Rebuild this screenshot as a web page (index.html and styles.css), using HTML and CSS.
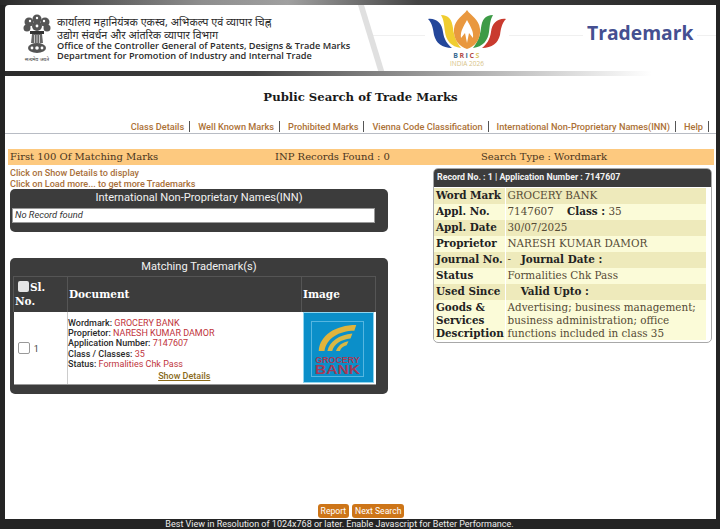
FILE: index.html
```html
<!DOCTYPE html>
<html lang="en">

<head>
    <meta charset="UTF-8">
    <title>Public Search of Trade Marks</title>
    <link rel="stylesheet" href="styles.css">
</head>

<body>
    <div class="top-strip"></div>

    <div class="page">
        <!-- Banner -->
        <header class="banner">
            <div class="banner-line"></div>
            <div class="banner-band"></div>
            <svg class="emblem" viewBox="0 0 30 50" aria-hidden="true">
                <g fill="#555">
                    <circle cx="15" cy="6" r="4.5"/>
                    <circle cx="7" cy="9" r="4.5"/>
                    <circle cx="23" cy="9" r="4.5"/>
                    <circle cx="5" cy="15" r="3.5"/>
                    <circle cx="25" cy="15" r="3.5"/>
                    <circle cx="15" cy="13" r="5"/>
                </g>
                <g fill="#fff">
                    <circle cx="8" cy="8" r="1.2"/>
                    <circle cx="22" cy="8" r="1.2"/>
                    <circle cx="15" cy="5" r="1.2"/>
                    <circle cx="15" cy="13" r="1.4"/>
                </g>
                <rect x="8" y="18" width="14" height="3" fill="#333"/>
                <path d="M10 21h10l1 9H9z" fill="#666"/>
                <path d="M12.500 22v8M15 22v8M17.500 22v8" stroke="#ddd" stroke-width=".8"/>
                <ellipse cx="15" cy="35" rx="9" ry="5" fill="#555"/>
                <circle cx="10" cy="35" r="1.400" fill="#fff"/>
                <circle cx="15" cy="35" r="1.800" fill="#fff"/>
                <circle cx="20" cy="35" r="1.400" fill="#fff"/>
                <text x="15" y="48" class="emblem-motto" text-anchor="middle">सत्यमेव जयते</text>
            </svg>
            <div class="office">
                <div class="office-hi">कार्यालय महानियंत्रक एकस्व, अभिकल्प एवं व्यापार चिह्न</div>
                <div class="office-hi">उद्योग संवर्धन और आंतरिक व्यापार विभाग</div>
                <div class="office-en">Office of the Controller General of Patents, Designs &amp; Trade Marks</div>
                <div class="office-en">Department for Promotion of Industry and Internal Trade</div>
            </div>
            <div class="brics">
                <svg class="lotus" viewBox="0 0 80 42" aria-hidden="true">
                    <path d="M1 9C9 8 15 13 16 22C17 29 20 34 25 38C15 38 9 33 7 25C6 18 5 13 1 9Z" fill="#24479a"/>
                    <path d="M14 5C22 5 25 10 26 18C27 27 30 33 34 38C24 37 19 30 18 22C17 15 17 10 14 5Z" fill="#f0cd30"/>
                    <path d="M79 9C71 8 65 13 64 22C63 29 60 34 55 38C65 38 71 33 73 25C74 18 75 13 79 9Z" fill="#c93a2e"/>
                    <path d="M66 5C58 5 55 10 54 18C53 27 50 33 46 38C56 37 61 30 62 22C63 15 63 10 66 5Z" fill="#3d9b47"/>
                    <path d="M40 0C44 6 52 9 53 19C54 30 47 37 40 39C33 37 26 30 27 19C28 9 36 6 40 0Z" fill="#e9983f"/>
                    <path d="M40 10C43 16 47 21 46 28L42 23L40 33L38 23L34 28C33 21 37 16 40 10Z" fill="#fff"/>
                </svg>
                <div class="brics-name"><span class="c-blue">B</span><span class="c-red">R</span><span class="c-blue">I</span><span class="c-red">C</span><span class="c-yellow">S</span></div>
                <div class="brics-year">INDIA 2026</div>
            </div>
            <div class="trademark">Trademark</div>
        </header>
        <div class="banner-rule"></div>

        <h1 class="page-title">Public Search of Trade Marks</h1>

        <nav class="menu">
            <a href="#">Class Details</a>
            <a href="#">Well Known Marks</a>
            <a href="#">Prohibited Marks</a>
            <a href="#">Vienna Code Classification</a>
            <a href="#">International Non-Proprietary Names(INN)</a>
            <a href="#">Help</a>
        </nav>

        <div class="result-bar">
            <span class="bar-first">First 100 Of Matching Marks</span>
            <span class="bar-inp">INP Records Found : 0</span>
            <span class="bar-type">Search Type : Wordmark</span>
        </div>

        <div class="results">
            <!-- Left column -->
            <div class="left-col">
                <p class="hint">Click on Show Details to display</p>
                <p class="hint">Click on Load more... to get more Trademarks</p>

                <section class="panel inn-panel">
                    <h2 class="panel-title">International Non-Proprietary Names(INN)</h2>
                    <div class="no-record">No Record found</div>
                </section>

                <section class="panel marks-panel">
                    <h2 class="panel-title">Matching Trademark(s)</h2>
                    <table class="marks-table">
                        <thead>
                            <tr>
                                <th class="col-sl"><input type="checkbox" class="check-all">Sl. No.</th>
                                <th class="col-doc">Document</th>
                                <th class="col-img">Image</th>
                            </tr>
                        </thead>
                        <tbody>
                            <tr>
                                <td class="cell-sl"><input type="checkbox" class="check-row"> 1</td>
                                <td class="cell-doc">
                                    <div>Wordmark: <span>GROCERY BANK</span></div>
                                    <div>Proprietor: <span>NARESH KUMAR DAMOR</span></div>
                                    <div>Application Number: <span>7147607</span></div>
                                    <div>Class / Classes: <span>35</span></div>
                                    <div>Status: <span>Formalities Chk Pass</span></div>
                                    <a href="#" class="show-details">Show Details</a>
                                </td>
                                <td class="cell-img">
                                    <div class="mark-logo">
                                        <svg class="mark-svg" viewBox="0 0 53 56" aria-hidden="true">
                                            <path d="M7 30C8 14 24 3 46 3L44 9C28 9 15 17 13 30Z" fill="#e0b43c"/>
                                            <path d="M16 30C18 21 28 13 42 12L40 17C30 18 23 23 21 30Z" fill="#d8b846"/>
                                            <path d="M25 30C27 25 31 21 38 20L36 24C32 25 30 27 29 30Z" fill="#d8b846"/>
                                            <text x="26.500" y="42.500" class="mark-small" text-anchor="middle" textLength="46" lengthAdjust="spacingAndGlyphs">GROCERY</text>
                                            <text x="26.500" y="54" class="mark-big" text-anchor="middle" textLength="47" lengthAdjust="spacingAndGlyphs">BANK</text>
                                        </svg>
                                    </div>
                                </td>
                            </tr>
                        </tbody>
                    </table>
                </section>
            </div>

            <!-- Record details -->
            <section class="record">
                <h3 class="record-head">Record No. : 1 | Application Number : 7147607</h3>
                <table class="record-table">
                    <tr><th>Word Mark</th><td>GROCERY BANK</td></tr>
                    <tr><th>Appl. No.</th><td>7147607 &nbsp;&nbsp; <b>Class :</b> 35</td></tr>
                    <tr><th>Appl. Date</th><td>30/07/2025</td></tr>
                    <tr><th>Proprietor</th><td>NARESH KUMAR DAMOR</td></tr>
                    <tr><th>Journal No.</th><td>- &nbsp;&nbsp;<b>Journal Date :</b></td></tr>
                    <tr><th>Status</th><td>Formalities Chk Pass</td></tr>
                    <tr><th>Used Since</th><td>&nbsp;&nbsp;&nbsp;&nbsp;<b>Valid Upto :</b></td></tr>
                    <tr class="row-tall"><th>Goods &amp; Services Description</th><td>Advertising; business management; business administration; office functions included in class 35</td></tr>
                </table>
            </section>
        </div>

        <div class="actions">
            <button type="button" class="btn">Report</button>
            <button type="button" class="btn">Next Search</button>
        </div>
    </div>

    <footer class="foot">Best View in Resolution of 1024x768 or later. Enable Javascript for Better Performance.</footer>
</body>

</html>
```

FILE: styles.css
```css
/* Global */
* {
    margin: 0;
    padding: 0;
    box-sizing: border-box;
}

html,
body {
    height: 100%;
    overflow: hidden;
}

body {
    display: flex;
    flex-direction: column;
    background-color: #242424;
    font-family: 'Roboto', sans-serif;
    color: #222;
}

.top-strip {
    height: 5px;
    background: linear-gradient(90deg, #2a2a2a 0%, #8e8e8e 28%, #a0a0a0 40%, #444 58%, #262626 100%);
}

.page {
    flex: 1;
    display: flex;
    flex-direction: column;
    margin: 0 4px 0 5px;
    background-color: #fff;
    border-radius: 4px 0 0 0;
    min-height: 0;
}

/* Banner */
.banner {
    position: relative;
    height: 66px;
    display: flex;
    align-items: center;
    padding-left: 17px;
    overflow: hidden;
}

.banner-band {
    position: absolute;
    top: 0;
    left: 353px;
    width: 6px;
    height: 70px;
    background-color: #e0e0e0;
    transform: skewX(17deg);
    transform-origin: top left;
}

.banner-line {
    position: absolute;
    top: 30px;
    left: 365px;
    right: 0;
    height: 1px;
    background-color: #f0f0f0;
}

.emblem {
    width: 30px;
    height: 50px;
    margin-right: 5px;
    flex: none;
}

.emblem-motto {
    font-family: 'Noto Sans', 'DejaVu Sans', sans-serif;
    font-size: 5px;
    fill: #333;
}

.office {
    width: 300px;
    color: #2b2b2b;
}

.office-hi {
    font-family: 'Noto Sans', 'Noto Sans Devanagari', 'Lohit Devanagari', 'DejaVu Sans', sans-serif;
    font-size: 10.8px;
    line-height: 13px;
    white-space: nowrap;
}

.office-en {
    font-family: 'Open Sans', sans-serif;
    font-size: 9.2px;
    font-weight: 600;
    line-height: 10.5px;
    white-space: nowrap;
}

.brics {
    position: relative;
    align-self: flex-start;
    width: 84px;
    padding: 0 2px;
    margin-left: 68px;
    text-align: center;
    background-color: #fff;
}

.lotus {
    display: block;
    width: 80px;
    height: 42px;
    margin-top: 5px;
}

.brics-name {
    font-family: 'Open Sans', sans-serif;
    font-size: 7px;
    font-weight: 700;
    letter-spacing: 1.5px;
    line-height: 9px;
    margin-top: -1px;
}

.c-blue { color: #3a6d94; }
.c-red { color: #b44c48; }
.c-yellow { color: #dcc86a; }

.brics-year {
    font-family: 'Open Sans', sans-serif;
    font-size: 6.5px;
    line-height: 7px;
    color: #d8c488;
}

.trademark {
    position: relative;
    margin-left: 74px;
    margin-bottom: 11px;
    padding: 0 4px;
    background-color: #fff;
    font-family: 'Open Sans', sans-serif;
    font-size: 19.3px;
    font-weight: 700;
    color: #454f91;
}

.banner-rule {
    height: 5px;
    background: linear-gradient(90deg, #2c2c2c 0%, #444 35%, #7a7a7a 50%, #dddddd 80%, #ffffff 91%);
}

.page-title {
    margin-top: 13px;
    text-align: center;
    font-family: 'DejaVu Serif', serif;
    font-size: 11.7px;
    line-height: 16px;
    color: #1a1a1a;
}

/* Menu */
.menu {
    display: flex;
    justify-content: flex-end;
    align-items: center;
    height: 13px;
    margin-top: 16px;
    padding: 0 7px 1px 0;
    border-bottom: 1px solid #b8bcc4;
    font-size: 9.2px;
    font-weight: 500;
    line-height: 11px;
}

.menu a {
    color: #ac7135;
    text-decoration: none;
    padding: 0 5px 0 8px;
    border-right: 1px solid #555;
    height: 11px;
}

/* Orange bar */
.result-bar {
    display: flex;
    height: 16px;
    margin: 15px 2px 0 3px;
    padding-left: 2px;
    background-color: #fdc97f;
    font-family: 'DejaVu Serif', serif;
    font-size: 10px;
    line-height: 16px;
    color: #4a3520;
}

.bar-first {
    width: 265px;
}

.bar-inp {
    width: 206px;
}

/* Two columns */
.results {
    flex: 1;
    display: flex;
    min-height: 0;
}

.left-col {
    width: 378px;
    margin-left: 5px;
    padding-top: 3px;
}

.hint {
    font-size: 9.1px;
    font-weight: 500;
    line-height: 10.5px;
    color: #a9703a;
}

.panel {
    background-color: #3c3c3c;
    border-radius: 5px;
    color: #fff;
}

.panel-title {
    font-size: 11.1px;
    font-weight: 400;
    line-height: 17px;
    text-align: center;
    color: #f2f2f2;
}

.inn-panel {
    height: 43px;
    padding: 0 13px 0 2px;
}

.inn-panel .panel-title {
    margin-right: -11px;
}

.no-record {
    height: 15px;
    margin-top: 2px;
    padding-left: 2px;
    background-color: #fff;
    border: 1px solid #999;
    font-size: 9.3px;
    font-style: italic;
    line-height: 12px;
    color: #333;
}

.marks-panel {
    height: 136px;
    margin-top: 26px;
    padding: 0 12px 0 3px;
}

.marks-panel .panel-title {
    margin-right: -9px;
    margin-bottom: 1px;
}

/* Marks table */
.marks-table {
    width: 100%;
    border-collapse: collapse;
    table-layout: fixed;
}

.marks-table th {
    height: 35px;
    padding: 0 1px;
    border: 1px solid #555;
    border-bottom: 0;
    font-family: 'DejaVu Serif', serif;
    font-size: 10.5px;
    line-height: 14px;
    text-align: left;
    vertical-align: middle;
}

.col-sl {
    width: 54px;
}

.col-img {
    width: 74px;
}

.check-all {
    appearance: none;
    width: 11px;
    height: 11px;
    margin: 0 1px 0 3px;
    vertical-align: -1px;
    background-color: #e6e6e6;
    border-radius: 2px;
}

.marks-table td {
    height: 73px;
    background-color: #fff;
    color: #444;
    border-bottom: 1px solid #999;
}

.cell-sl {
    padding-left: 4px;
    border-right: 1px solid #ccc;
    font-size: 9px;
}

.check-row {
    appearance: none;
    width: 12px;
    height: 12px;
    vertical-align: -2px;
    margin-right: 2px;
    border: 1px solid #999;
    border-radius: 2px;
}

.cell-doc {
    padding: 6px 1px 0 0;
    font-size: 9px;
    line-height: 10.4px;
    vertical-align: top;
}

.cell-doc div {
    font-weight: 500;
    color: #2a2a2a;
}

.cell-doc span {
    font-weight: 400;
    color: #c0343c;
}

.show-details {
    display: block;
    text-align: center;
    margin-top: 1px;
    color: #8a6a1a;
    font-weight: 500;
}

.cell-img {
    padding: 0;
}

.mark-logo {
    height: 71px;
    margin: 0 2px 0 1px;
    padding: 8px 0 0 7px;
    background-color: #0b8fc9;
    border: 1px solid #8fd5ef;
}

.mark-svg {
    display: block;
    width: 53px;
    height: 56px;
    border: 1px solid #56b6e0;
}

.mark-small {
    font-family: 'Liberation Sans', sans-serif;
    font-size: 8.5px;
    font-weight: 700;
    fill: #a63a55;
}

.mark-big {
    font-family: 'Liberation Sans', sans-serif;
    font-size: 13px;
    font-weight: 700;
    fill: #a63a55;
}

/* Record panel */
.record {
    width: 279px;
    height: 175px;
    margin: 3px 0 0 45px;
    border: 1px solid #a8a8a8;
    border-radius: 5px;
    overflow: hidden;
    background-color: #fff;
}

.record-head {
    height: 18px;
    padding-left: 3px;
    background-color: #3c3c3c;
    color: #f2f2f2;
    font-size: 8.8px;
    font-weight: 700;
    line-height: 16px;
}

.record-table {
    width: 272px;
    margin-top: 1px;
    border-collapse: collapse;
    font-family: 'DejaVu Serif', serif;
    font-size: 10.4px;
    color: #554a35;
}

.record-table tr:nth-child(odd) {
    background-color: #eeeabb;
}

.record-table tr:nth-child(even) {
    background-color: #fbfbd8;
}

.record-table th,
.record-table td {
    height: 16px;
    padding: 0 0 0 2px;
    text-align: left;
    vertical-align: top;
    line-height: 15px;
}

.record-table th {
    width: 71px;
    color: #222;
}

.record-table td {
    border-left: 1px solid #fff;
}

.record-table b {
    color: #222;
}

.row-tall th,
.row-tall td {
    line-height: 13px;
    padding-top: 1px;
}

/* Bottom buttons */
.actions {
    display: flex;
    justify-content: center;
    gap: 3px;
    padding: 0 0 1px 1px;
}

.btn {
    height: 14px;
    padding: 0 3px;
    background-color: #cd7518;
    border: none;
    border-radius: 3px;
    color: #fff;
    font-family: 'Roboto', sans-serif;
    font-size: 8.6px;
    line-height: 14px;
}

.foot {
    height: 10px;
    padding-right: 41px;
    text-align: center;
    font-size: 9px;
    line-height: 10px;
    color: #eee;
}
```
